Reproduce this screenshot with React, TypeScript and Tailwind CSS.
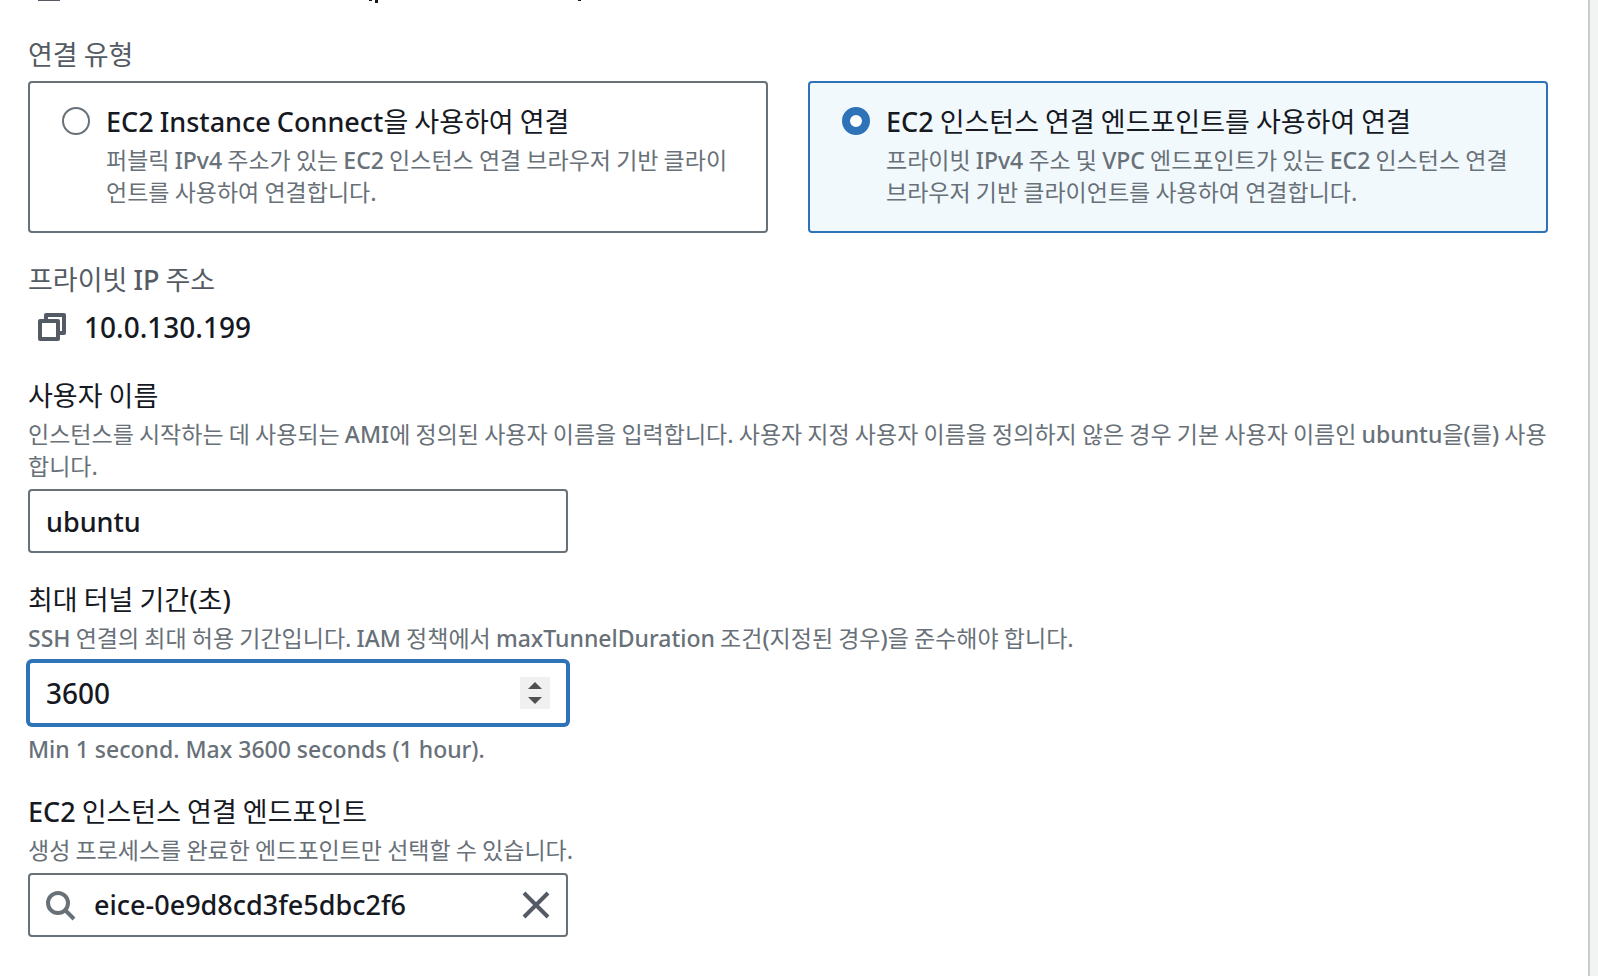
import { useState } from "react";
import type { ReactNode } from "react";
import clsx from "clsx";

const CONNECTION_TYPES = [
  {
    id: "instance-connect",
    title: "EC2 Instance Connect을 사용하여 연결",
    description:
      "퍼블릭 IPv4 주소가 있는 EC2 인스턴스 연결 브라우저 기반 클라이언트를 사용하여 연결합니다.",
  },
  {
    id: "instance-connect-endpoint",
    title: "EC2 인스턴스 연결 엔드포인트를 사용하여 연결",
    description:
      "프라이빗 IPv4 주소 및 VPC 엔드포인트가 있는 EC2 인스턴스 연결 브라우저 기반 클라이언트를 사용하여 연결합니다.",
  },
];

// Hangul and spaces stay in the CJK font, Latin runs switch to Noto Sans.
function Mixed({ text }: { text: string }) {
  return text.split(/([A-Za-z0-9()]+)/).map((part, i) =>
    i % 2 ? (
      <span
        key={i}
        className="font-['Noto_Sans',sans-serif] font-medium leading-none"
      >
        {part}
      </span>
    ) : (
      part
    )
  );
}

function Description({ text }: { text: string }) {
  return (
    <span className="block text-[23px] leading-8 text-[#687078]">
      <Mixed text={text} />
    </span>
  );
}

function CopyIcon() {
  return (
    <svg
      width="32"
      height="32"
      viewBox="0 0 32 32"
      fill="none"
      stroke="currentColor"
      strokeWidth="4"
      strokeLinejoin="round"
      aria-hidden="true"
    >
      <path d="M10 8V4h18v18h-4" />
      <path d="M4 10h18v18H4z" />
    </svg>
  );
}

function Field({
  id,
  label,
  description,
  hint,
  children,
}: {
  id: string;
  label: string;
  description: string;
  hint?: string;
  children: ReactNode;
}) {
  return (
    <div>
      <label htmlFor={id} className="block text-[27px] leading-11">
        <Mixed text={label} />
      </label>
      <Description text={description} />
      <div className="mt-2 max-w-[540px]">{children}</div>
      {hint && (
        <p className="mt-2 font-['Noto_Sans',sans-serif] text-[23px] font-medium leading-8 text-[#687078]">
          {hint}
        </p>
      )}
    </div>
  );
}

export default function App() {
  const [type, setType] = useState("instance-connect-endpoint");
  const [username, setUsername] = useState("ubuntu");
  const [duration, setDuration] = useState(3600);
  const [endpoint, setEndpoint] = useState("eice-0e9d8cd3fe5dbc2f6");

  const step = (by: number) =>
    setDuration((d) => Math.min(3600, Math.max(1, d + by)));

  return (
    <div className="min-h-screen bg-[#f2f3f3] pr-2 font-['Noto_Sans_CJK_KR','Noto_Sans',sans-serif] text-[#16191f]">
      <main className="min-h-screen border-r-2 border-[#c9cdd1] bg-white pl-7 pr-10 pb-9">
        {/* tail of the instance id row, scrolled out of view */}
        <svg className="block h-1 w-full" aria-hidden="true">
          <rect x="10" y="0" width="22" height="1" fill="#545b64" />
          <rect x="341" y="0" width="3" height="1" fill="#16191f" />
          <rect x="347" y="0" width="3" height="3" fill="#16191f" />
          <rect x="550" y="0" width="3" height="1" fill="#16191f" />
        </svg>

        <fieldset className="pt-7">
          <legend className="float-left w-full text-[27px] leading-11 text-[#545b64]">
            연결 유형
          </legend>
          <div className="clear-both grid grid-cols-2 gap-10 pt-[5px]">
            {CONNECTION_TYPES.map((item) => {
              const checked = type === item.id;
              return (
                <label
                  key={item.id}
                  className={clsx(
                    "flex gap-4 rounded-sm border-2 px-8 pt-4 pb-6",
                    checked
                      ? "border-[#2e73b8] bg-[#f2f9fd]"
                      : "border-[#687078] bg-white"
                  )}
                >
                  <input
                    type="radio"
                    name="connection-type"
                    checked={checked}
                    onChange={() => setType(item.id)}
                    className="mt-2 size-7 shrink-0 appearance-none rounded-full border-2 border-[#687078] bg-white checked:border-8 checked:border-[#2e73b8]"
                  />
                  <span>
                    <span className="block text-[27px] leading-11">
                      <Mixed text={item.title} />
                    </span>
                    <Description text={item.description} />
                  </span>
                </label>
              );
            })}
          </div>
        </fieldset>

        <div className="mt-6">
          <div className="text-[27px] leading-11 text-[#545b64]">
            <Mixed text="프라이빗 IP 주소" />
          </div>
          <div className="mt-1 flex items-center gap-4 pl-2">
            <button
              type="button"
              aria-label="프라이빗 IP 주소 복사"
              className="text-[#545b64]"
              onClick={() => navigator.clipboard?.writeText("10.0.130.199")}
            >
              <CopyIcon />
            </button>
            <span className="font-['Noto_Sans',sans-serif] text-[28px] font-medium leading-11">
              10.0.130.199
            </span>
          </div>
        </div>

        <div className="mt-6 flex flex-col gap-6">
          <Field
            id="username"
            label="사용자 이름"
            description="인스턴스를 시작하는 데 사용되는 AMI에 정의된 사용자 이름을 입력합니다. 사용자 지정 사용자 이름을 정의하지 않은 경우 기본 사용자 이름인 ubuntu을(를) 사용합니다."
          >
            <input
              id="username"
              type="text"
              value={username}
              onChange={(e) => setUsername(e.target.value)}
              className="block h-16 w-full rounded-sm border-2 border-[#687078] bg-white px-4 font-['Noto_Sans',sans-serif] text-[27px] font-medium outline-none"
            />
          </Field>

          <Field
            id="duration"
            label="최대 터널 기간(초)"
            description="SSH 연결의 최대 허용 기간입니다. IAM 정책에서 maxTunnelDuration 조건(지정된 경우)을 준수해야 합니다."
            hint="Min 1 second. Max 3600 seconds (1 hour)."
          >
            <div className="flex h-16 items-center rounded-sm border-2 border-[#2e73b8] bg-white px-4 ring-2 ring-[#2e73b8]">
              <input
                id="duration"
                type="number"
                min={1}
                max={3600}
                value={duration}
                onChange={(e) => setDuration(Number(e.target.value))}
                className="min-w-0 flex-1 appearance-none font-['Noto_Sans',sans-serif] text-[28px] font-medium outline-none [-moz-appearance:textfield] [&::-webkit-inner-spin-button]:appearance-none"
              />
              <span className="flex h-8 w-[30px] flex-col bg-[#f0f0f0] text-[#505050]">
                <button
                  type="button"
                  aria-label="증가"
                  className="flex flex-1 items-end justify-center pb-1"
                  onClick={() => step(1)}
                >
                  <svg width="14" height="7" viewBox="0 0 14 7" aria-hidden="true">
                    <path d="M7 0l7 7H0z" fill="currentColor" />
                  </svg>
                </button>
                <button
                  type="button"
                  aria-label="감소"
                  className="flex flex-1 items-start justify-center pt-1"
                  onClick={() => step(-1)}
                >
                  <svg width="14" height="7" viewBox="0 0 14 7" aria-hidden="true">
                    <path d="M0 0h14L7 7z" fill="currentColor" />
                  </svg>
                </button>
              </span>
            </div>
          </Field>

          <Field
            id="endpoint"
            label="EC2 인스턴스 연결 엔드포인트"
            description="생성 프로세스를 완료한 엔드포인트만 선택할 수 있습니다."
          >
            <div className="flex h-16 items-center gap-4 rounded-sm border-2 border-[#687078] bg-white px-4">
              <svg
                width="32"
                height="32"
                viewBox="0 0 32 32"
                fill="none"
                stroke="#687078"
                strokeWidth="4"
                className="shrink-0"
                aria-hidden="true"
              >
                <circle cx="12" cy="14" r="10" />
                <path d="M19 21l9 9" />
              </svg>
              <input
                id="endpoint"
                type="text"
                value={endpoint}
                onChange={(e) => setEndpoint(e.target.value)}
                className="min-w-0 flex-1 font-['Noto_Sans',sans-serif] text-[27px] font-medium outline-none"
              />
              <button
                type="button"
                aria-label="지우기"
                className="text-[#545b64]"
                onClick={() => setEndpoint("")}
              >
                <svg
                  width="28"
                  height="28"
                  viewBox="0 0 28 28"
                  fill="none"
                  stroke="currentColor"
                  strokeWidth="4"
                  aria-hidden="true"
                >
                  <path d="M2 2l24 24M26 2L2 26" />
                </svg>
              </button>
            </div>
          </Field>
        </div>
      </main>
    </div>
  );
}
